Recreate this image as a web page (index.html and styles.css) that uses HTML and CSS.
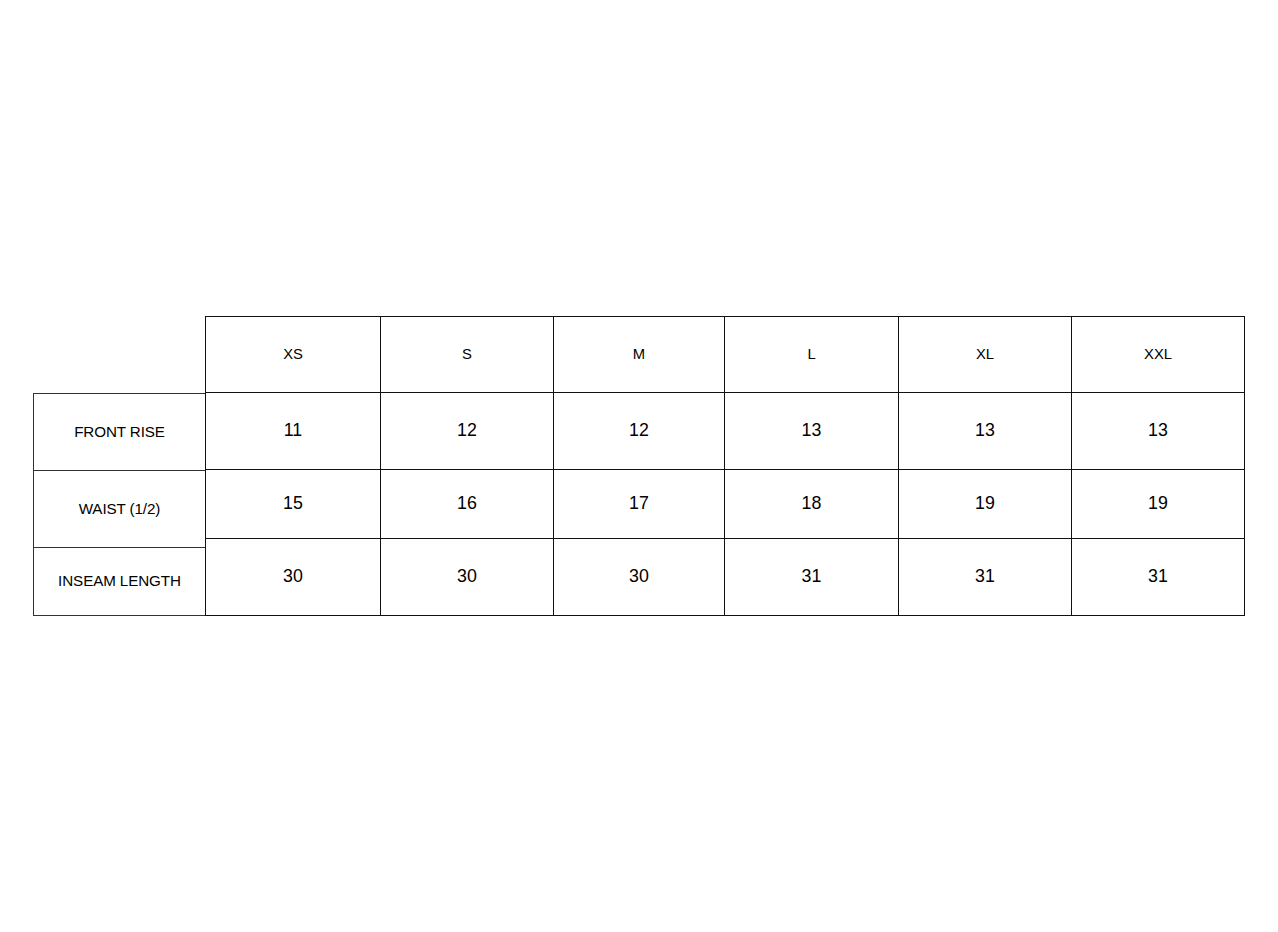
FILE: index.html
```html
<!DOCTYPE html>
<html lang="en">
<head>
<meta charset="utf-8">
<title>Size chart</title>
<link rel="stylesheet" href="styles.css">
</head>
<body>
<main class="chart">
  <div class="labels">
    <div class="label row-a">FRONT RISE</div>
    <div class="label row-b">WAIST (1/2)</div>
    <div class="label row-c">INSEAM LENGTH</div>
  </div>
  <div class="grid">
    <div class="cell head">XS</div>
    <div class="cell head">S</div>
    <div class="cell head">M</div>
    <div class="cell head">L</div>
    <div class="cell head">XL</div>
    <div class="cell head">XXL</div>

    <div class="cell num">11</div>
    <div class="cell num">12</div>
    <div class="cell num">12</div>
    <div class="cell num">13</div>
    <div class="cell num">13</div>
    <div class="cell num">13</div>

    <div class="cell num">15</div>
    <div class="cell num">16</div>
    <div class="cell num">17</div>
    <div class="cell num">18</div>
    <div class="cell num">19</div>
    <div class="cell num">19</div>

    <div class="cell num">30</div>
    <div class="cell num">30</div>
    <div class="cell num">30</div>
    <div class="cell num">31</div>
    <div class="cell num">31</div>
    <div class="cell num">31</div>
  </div>
</main>
</body>
</html>
```
FILE: styles.css
```css
html, body {
  margin: 0;
  padding: 0;
  background: #ffffff;
}

body {
  font-family: "Liberation Sans", Arial, sans-serif;
  color: #000000;
  width: 1278px;
  height: 932px;
}

.chart {
  display: flex;
  align-items: flex-end;
  padding: 316px 0 0 33px;
}

.labels {
  width: 172px;
  box-sizing: border-box;
  border-left: 1px solid #333;
  border-top: 1px solid #333;
  display: flex;
  flex-direction: column;
}

.label {
  box-sizing: border-box;
  border-bottom: 1px solid #333;
  display: flex;
  align-items: center;
  justify-content: center;
  font-size: 15.2px;
  letter-spacing: -0.1px;
  padding-bottom: 1px;
}

.row-a { height: 77px; }
.row-b { height: 77px; }
.row-c { height: 68px; padding-bottom: 3px; }

.grid {
  display: grid;
  grid-template-columns: 175px 173px 171px 174px 173px 173px;
  grid-template-rows: 76px 77px 69px 77px;
  border-left: 1px solid #111;
  border-top: 1px solid #111;
}

.cell {
  box-sizing: border-box;
  border-right: 1px solid #111;
  border-bottom: 1px solid #111;
  display: flex;
  align-items: center;
  justify-content: center;
}

.head {
  font-size: 14.8px;
  padding-bottom: 1px;
}

.num {
  font-size: 17.8px;
  padding-bottom: 1px;
}
```
